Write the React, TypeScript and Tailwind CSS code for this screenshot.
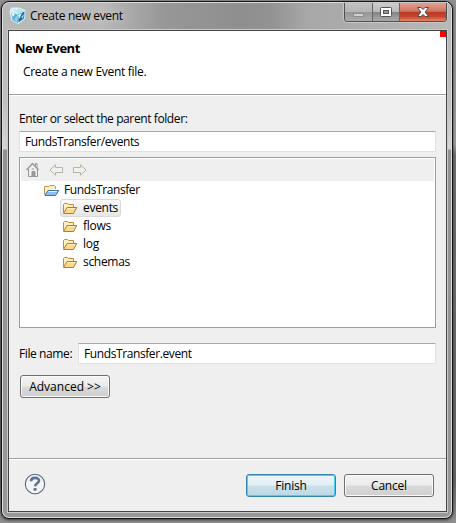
import React from "react";

function Cube() {
  return (
    <svg width="18" height="18" viewBox="0 0 18 18" className="shrink-0">
      <path d="M2 0.5 L10 0.5 L16.5 3 L16 12 L9.5 17 L2.5 13.5 L0.5 5Z" fill="#d8f3fa" />
      <path d="M4 2.5 L10 1.5 L15.5 4 L9 6.5Z" fill="#b4e2f3" />
      <path d="M2 5 L8.5 7.5 L9 16 L3.5 13Z" fill="#58b0d4" />
      <path d="M9 7.5 L15.5 4.5 L15 11.5 L9.5 15.5Z" fill="#1c6e9e" />
      <path d="M2 5 L6 7 L4 10Z M9 8 L13 6 L10 12Z M6 3 L9 2 L8 4Z" fill="#e9fbff" />
      <path d="M5 12 L8 9 L8 15Z M12 10 L15 7 L14 12Z" fill="#8fd3ec" />
    </svg>
  );
}

function Folder() {
  return (
    <svg width="16" height="14" viewBox="0 0 16 14" className="shrink-0">
      <path d="M1.5 11.5 V3.5 L2.5 2.5 H5.5 L6.5 3.5 H11.5 V6" fill="#fff0bf" stroke="#c08a3e" />
      <path d="M1.5 12.5 L5 6.5 H14.8 L11.5 12.5Z" fill="#fbd98a" stroke="#b87830" />
      <path d="M5.5 7.5 H13" stroke="#fff1c4" />
    </svg>
  );
}

function ProjectFolder() {
  return (
    <svg width="17" height="14" viewBox="0 0 17 14" className="shrink-0">
      <path d="M1.5 11.5 V3.5 H6 L7 2.5 H11.5 L12.5 3.5 V6" fill="#fff0bf" stroke="#b99a55" />
      <path d="M2 12 L5 7.5 H15.8 L12.5 12.5 H2Z" fill="#8fbdf0" stroke="#426fae" />
      <path d="M5.5 8.5 H14" stroke="#e2f3ff" />
    </svg>
  );
}

function Home() {
  return (
    <svg width="15" height="16" viewBox="0 0 15 16" fill="none" stroke="#999">
      <path d="M0.5 8 L6.5 1.5 L12.5 8" strokeWidth="1.4" />
      <path d="M2.5 7 V14.5 H11.5 V7 M9.5 4 V1.5 H11 V6" />
      <path d="M6 9.5 H9 V14 H6Z M6 7 H8" fill="#999" />
    </svg>
  );
}

function Arrow({ flip = false }: { flip?: boolean }) {
  return (
    <svg width="15" height="12" viewBox="0 0 15 12" className={flip ? "-scale-x-100" : ""}>
      <path d="M1 6 L6.5 0.8 V3.5 H13.5 V8.5 H6.5 V11.2Z" fill="#f3f3ea" stroke="#b4b4ac" />
    </svg>
  );
}

const button =
  "flex h-[23px] w-[90px] items-center justify-center rounded-[3px] border whitespace-nowrap";
const grayButton =
  "border-[#707070] bg-[linear-gradient(#f3f3f3_0%,#ebebeb_48%,#dadada_52%,#cfcfcf_100%)] shadow-[inset_0_0_0_1px_#fafafa]";
const field = "flex h-[21px] items-center border border-[#dfe1e5] border-t-[#a6a8ad] bg-white pl-[5px]";

export default function App() {
  return (
    <div className="h-[523px] w-[456px] overflow-hidden bg-[linear-gradient(#909090_0px,#a0a0a0_145px,#707070_155px,#666_480px,#909090_523px)] pt-px pl-px font-['Open_Sans','Noto_Sans',sans-serif] text-[12px] leading-[18px] tracking-[-0.4px] text-black">
      <div className="h-[518px] w-[452px] rounded-[8px] border border-[#151515] bg-[#ddd] p-px shadow-[0_1px_3px_#333]">
        <div className="h-full w-full rounded-[6px] bg-[linear-gradient(#b6b6b6_0px,#c0c0c0_100px,#d5d5d5_146px,#929292_147px,#999_514px)]">
          <div className="flex h-[27px] justify-between rounded-t-[6px] bg-[linear-gradient(90deg,#b8b8b8_0%,#b9b9b9_22%,#979797_36%,#8f8f8f_53%,#929292_60%,#a8a8a8_68%,#aaa_74%,#b8b8b8_100%)]">
            <div className="flex pt-[4px] pl-[6px]">
              <Cube />
              <span className="pl-[3px] tracking-[-0.3px] [text-shadow:0_0_6px_#ddd]">Create new event</span>
            </div>
            <div className="mr-[4px] flex h-[19px] w-[103px] overflow-hidden rounded-b-[4px] border border-t-0 border-[#505050] shadow-[0_0_0_1px_#c8c8c8]">
              <div className="flex w-[28px] items-center justify-center border-r border-[#666] bg-[linear-gradient(#c2c2c2_0%,#b5b5b5_48%,#979797_52%,#acacac_100%)]">
                <div className="mt-[5px] h-[4px] w-[11px] border border-[#8e8e8e] bg-[#d0d0d0]" />
              </div>
              <div className="flex w-[27px] items-center justify-center border-r border-[#666] bg-[linear-gradient(#cecece_0%,#bababa_48%,#858585_52%,#aaa_100%)]">
                <svg width="12" height="10" viewBox="0 0 12 10" fill="none" className="mb-px">
                  <rect x="0.5" y="0.5" width="11" height="9" rx="1" fill="#fff" stroke="#55565d" />
                  <rect x="3.5" y="3.5" width="5" height="3" fill="#999" stroke="#55565d" />
                </svg>
              </div>
              <div className="flex flex-1 items-center justify-center bg-[linear-gradient(#e2a091_0%,#d17561_46%,#b83b25_52%,#c64630_75%,#e58668_100%)]">
                <svg width="14" height="12" viewBox="0 0 14 12" fill="none" className="mb-px">
                  <path d="M1.5 1.5 H5 L7 3.5 L9 1.5 H12.5 L9.2 6 L12.5 10.5 H9 L7 8.4 L5 10.5 H1.5 L4.8 6Z" fill="#fff" stroke="#58484a" />
                </svg>
              </div>
            </div>
          </div>
          <div className="ml-[5px] flex h-[482px] w-[439px] flex-col border border-[#444] bg-[#efefef] shadow-[0_0_0_1px_#cacaca]">
            <header className="flex h-[64px] justify-between border-b border-[#a0a0a0] bg-white">
              <div className="pl-[6px]">
                <div className="pt-[7px] text-[13px] leading-[20px] font-bold tracking-[-0.5px]">New Event</div>
                <div className="pt-[5px] pl-[8px] tracking-[-0.3px]">Create a new Event file.</div>
              </div>
              <div className="h-[6px] w-[6px] bg-[#f00]" />
            </header>
            <main className="h-[363px] border-t border-white px-[10px] pt-[14px]">
              <div className="h-[21px]">Enter or select the parent folder:</div>
              <div className={field}>FundsTransfer/events</div>
              <div className="mt-[5px] h-[171px] border border-[#9a9da3] bg-white p-px">
                <div className="flex h-[22px] items-center gap-[8px] bg-[#efefef] pl-[5px]">
                  <Home />
                  <Arrow />
                  <Arrow flip />
                </div>
                <div className="pl-[22px]">
                  <div className="flex h-[18px] items-center gap-[4px]">
                    <ProjectFolder />
                    <span>FundsTransfer</span>
                  </div>
                  <div className="pl-[17px]">
                    <div className="flex h-[18px] w-[61px] items-center gap-[5px] rounded-[3px] border border-[#d9d9d9] bg-[linear-gradient(#fafafa,#e6e6e6)] pl-px tracking-[-0.3px]">
                      <Folder />
                      <span>events</span>
                    </div>
                    {["flows", "log", "schemas"].map((name) => (
                      <div key={name} className="flex h-[18px] items-center gap-[5px] pl-[2px] tracking-[-0.3px]">
                        <Folder />
                        <span>{name}</span>
                      </div>
                    ))}
                  </div>
                </div>
              </div>
              <div className="mt-[15px] flex items-center">
                <span className="w-[59px] whitespace-nowrap">File name:</span>
                <div className={`${field} flex-1`}>FundsTransfer.event</div>
              </div>
              <div className={`${button} ${grayButton} mt-[11px] ml-px tracking-normal`}>Advanced &gt;&gt;</div>
            </main>
            <footer className="flex flex-1 justify-between border-t border-[#a0a0a0] pt-[15px] pr-[12px] pl-[15px] shadow-[inset_0_1px_0_#fff]">
              <svg width="22" height="22" viewBox="0 0 22 22" fill="none" className="-mt-px">
                <circle cx="11" cy="11" r="9.7" fill="#f4f4f5" stroke="#56677f" strokeWidth="1.1" />
                <path d="M7 8.2 C7 3.8 15 3.8 15 7.7 C15 10.3 11.2 10.2 11.2 13.3" stroke="#5d7191" strokeWidth="2.6" />
                <rect x="9.5" y="15" width="3.2" height="2.8" rx="1" fill="#5d7191" />
              </svg>
              <div className="flex gap-[8px] tracking-[-0.2px]">
                <div className={`${button} border-[#3585ab] bg-[linear-gradient(#edf5f9_0%,#e1eff6_48%,#c9e0eb_52%,#bcd8e6_100%)] shadow-[inset_0_0_0_1px_#49d1f4]`}>
                  Finish
                </div>
                <div className={`${button} ${grayButton}`}>Cancel</div>
              </div>
            </footer>
          </div>
        </div>
      </div>
    </div>
  );
}
